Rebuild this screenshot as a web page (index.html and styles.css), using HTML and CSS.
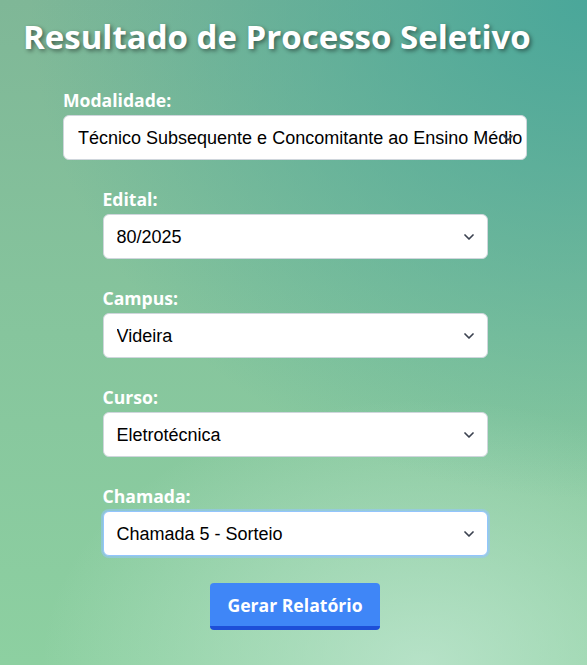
FILE: index.html
```html
<!DOCTYPE html>
<html lang="pt-BR">
<head>
<meta charset="utf-8">
<title>Resultado de Processo Seletivo</title>
<link rel="stylesheet" href="styles.css">
</head>
<body>
<h1 class="title">Resultado de Processo Seletivo</h1>
<form class="form">
  <div class="group group-wide">
    <label class="label" for="modalidade">Modalidade:</label>
    <div class="select-wrap">
      <select class="select select-wide" id="modalidade">
        <option>Técnico Subsequente e Concomitante ao Ensino Médio</option>
      </select>
      <svg class="chevron" viewBox="0 0 10 6" width="10" height="6" aria-hidden="true"><path d="M1 1 L5 5 L9 1"/></svg>
    </div>
  </div>
  <div class="group">
    <label class="label" for="edital">Edital:</label>
    <div class="select-wrap">
      <select class="select" id="edital"><option>80/2025</option></select>
      <svg class="chevron" viewBox="0 0 10 6" width="10" height="6" aria-hidden="true"><path d="M1 1 L5 5 L9 1"/></svg>
    </div>
  </div>
  <div class="group">
    <label class="label" for="campus">Campus:</label>
    <div class="select-wrap">
      <select class="select" id="campus"><option>Videira</option></select>
      <svg class="chevron" viewBox="0 0 10 6" width="10" height="6" aria-hidden="true"><path d="M1 1 L5 5 L9 1"/></svg>
    </div>
  </div>
  <div class="group">
    <label class="label" for="curso">Curso:</label>
    <div class="select-wrap">
      <select class="select" id="curso"><option>Eletrotécnica</option></select>
      <svg class="chevron" viewBox="0 0 10 6" width="10" height="6" aria-hidden="true"><path d="M1 1 L5 5 L9 1"/></svg>
    </div>
  </div>
  <div class="group">
    <label class="label" for="chamada">Chamada:</label>
    <div class="select-wrap">
      <select class="select select-focus" id="chamada"><option>Chamada 5 - Sorteio</option></select>
      <svg class="chevron" viewBox="0 0 10 6" width="10" height="6" aria-hidden="true"><path d="M1 1 L5 5 L9 1"/></svg>
    </div>
  </div>
  <button type="button" class="button">Gerar Relatório</button>
</form>
</body>
</html>
```
FILE: styles.css
```css
html, body {
  margin: 0;
  height: 100%;
}
body {
  font-family: "Open Sans", "Liberation Sans", sans-serif;
  background:
    radial-gradient(ellipse 95% 75% at 100% 0%, rgba(74, 167, 154, 1) 0%, rgba(74, 167, 154, 0.55) 45%, rgba(74, 167, 154, 0) 100%),
    radial-gradient(ellipse 65% 40% at 72% 100%, rgba(196, 232, 212, 0.75) 0%, rgba(196, 232, 212, 0) 100%),
    linear-gradient(to bottom, #7fb797 0%, #86c59d 50%, #8dd0a1 100%);
  padding: 16px 0 0 23px;
  box-sizing: border-box;
  overflow: hidden;
}
.title {
  margin: 0;
  font-size: 33px;
  font-weight: 700;
  color: #ffffff;
  line-height: 1.25;
  text-shadow: 2px 2px 4px rgba(0, 0, 0, 0.45);
}
.form {
  display: flex;
  flex-direction: column;
  align-items: center;
  margin: 31px 0 0 -20px;
}
.group {
  width: 385px;
  display: flex;
  flex-direction: column;
  margin-bottom: 27px;
}
.group-wide {
  width: 464px;
}
.label {
  font-size: 17.6px;
  font-weight: 700;
  color: #ffffff;
  line-height: 24px;
  margin-bottom: 3px;
}
.select-wrap {
  position: relative;
  display: flex;
}
.select {
  appearance: none;
  -webkit-appearance: none;
  height: 45px;
  width: 100%;
  box-sizing: border-box;
  padding: 0 10px 0 13px;
  font-family: "Liberation Sans", Arial, sans-serif;
  font-size: 18px;
  color: #000;
  background: #ffffff;
  border: 1px solid #cfd6dc;
  border-radius: 6px;
  outline: none;
}
.select-wide {
  padding: 0 4px 0 14px;
}
.select-focus {
  border-color: #93c5fd;
  box-shadow: 0 0 0 2px rgba(147, 197, 253, 0.55);
}
.chevron {
  position: absolute;
  right: 14px;
  top: 20px;
  fill: none;
  stroke: #3b4250;
  stroke-width: 1.7;
  stroke-linecap: round;
  stroke-linejoin: round;
  pointer-events: none;
}
.button {
  width: 170px;
  height: 47px;
  box-sizing: border-box;
  font-family: "Open Sans", sans-serif;
  font-size: 17.6px;
  font-weight: 700;
  color: #ffffff;
  background: #3f86f7;
  border: none;
  border-bottom: 4px solid #1d4ed8;
  border-radius: 4px;
  padding: 0;
  cursor: pointer;
}
```
